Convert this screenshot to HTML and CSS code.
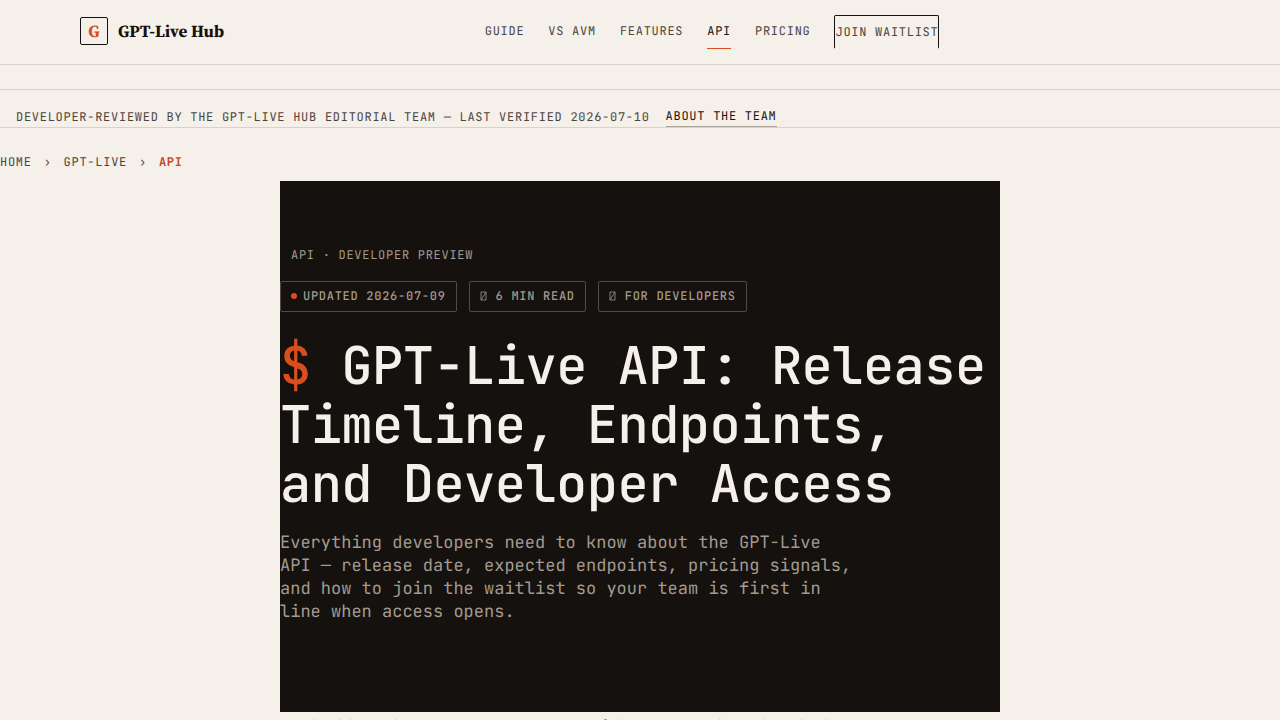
FILE: index.html
```html
<!DOCTYPE html>
<html lang="en">
<head>
  <meta charset="UTF-8">
  <meta name="viewport" content="width=device-width, initial-scale=1">
  <title>GPT-Live API</title>
  <link rel="stylesheet" href="styles.css">
</head>
<body>
<header class="site-header">
  <a class="brand" href="#">
    <span class="brand-mark">G</span>
    <span class="brand-name">GPT-Live Hub</span>
  </a>
  <nav class="site-nav" aria-label="Main">
    <a href="#">Guide</a>
    <a href="#">vs AVM</a>
    <a href="#">Features</a>
    <a class="active" href="#">API</a>
    <a href="#">Pricing</a>
    <a class="nav-cta" href="#">Join waitlist</a>
  </nav>
  <div class="header-end"></div>
</header>

<div class="review-bar">
  <span>Developer-reviewed by the GPT-Live Hub editorial team — last verified 2026-07-10</span>
  <a href="#">About the team</a>
</div>

<nav class="breadcrumb" aria-label="Breadcrumb">
  <a href="#">Home</a>
  <span class="sep">›</span>
  <a href="#">GPT-Live</a>
  <span class="sep">›</span>
  <span class="current">API</span>
</nav>

<main class="page">
  <section class="hero">
    <p class="eyebrow">API · Developer preview</p>
    <div class="tags">
      <span class="tag"><span class="dot"></span>Updated 2026-07-09</span>
      <span class="tag">
        <svg class="tag-icon" viewBox="0 0 8 10" aria-hidden="true"><path d="M1 1h5v8h-5zM1 9l5-8"/></svg>
        6 min read
      </span>
      <span class="tag">
        <svg class="tag-icon" viewBox="0 0 8 10" aria-hidden="true"><path d="M1 1h5v8h-5zM1 9l5-8"/></svg>
        For developers
      </span>
    </div>
    <h1><span class="prompt">$</span> GPT-Live API: Release Timeline, Endpoints, and Developer Access</h1>
    <p class="lead">Everything developers need to know about the GPT-Live API — release date, expected endpoints, pricing signals, and how to join the waitlist so your team is first in line when access opens.</p>
  </section>
  <p class="intro">For builders, the most interesting part of the GPT-Live launch is the key</p>
</main>
</body>
</html>
```
FILE: styles.css
```css
:root {
  --paper: #f5f0ea;
  --ink: #15110e;
  --ink-soft: #4a443e;
  --line: #d8d2cb;
  --muted: #a39b90;
  --accent: #d94e1f;
  --accent-deep: #c9451b;
  --mono: "JetBrains Mono", "Liberation Mono", monospace;
  --serif: "Source Serif 4", "Liberation Serif", serif;
}
* {
  box-sizing: border-box;
}
body {
  margin: 0;
  background: var(--paper);
  color: var(--ink);
  font-family: var(--serif);
  font-size: 18px;
  line-height: 31px;
  text-rendering: geometricPrecision;
}
a {
  color: inherit;
  text-decoration: none;
}
h1, p {
  margin: 0;
}

/* header */
.site-header {
  display: flex;
  justify-content: space-between;
  align-items: center;
  height: 65px;
  padding: 0 80px;
  border-bottom: 1px solid var(--line);
}
.brand {
  display: flex;
  align-items: center;
  gap: 10px;
  padding-bottom: 2px;
}
.brand-mark,
.brand-name {
  font-size: 17px;
  font-weight: 700;
}
.brand-mark {
  display: flex;
  align-items: center;
  justify-content: center;
  width: 28px;
  height: 28px;
  border: 1px solid var(--ink);
  border-radius: 2px;
  color: var(--accent);
}
.site-nav,
.review-bar,
.breadcrumb,
.eyebrow,
.tag {
  font-family: var(--mono);
  font-size: 12px;
  line-height: 16px;
  letter-spacing: 0.06em;
  text-transform: uppercase;
}
.site-nav {
  display: flex;
  gap: 24px;
  height: 34px;
  color: var(--ink-soft);
}
.site-nav a {
  padding-top: 8px;
  border-bottom: 1px solid transparent;
}
.site-nav .active {
  color: var(--ink);
  border-bottom-color: var(--accent);
}
.site-nav .nav-cta {
  border: 1px solid var(--ink);
  border-bottom-color: transparent;
  border-radius: 2px;
}

/* review line */
.review-bar {
  display: flex;
  gap: 16px;
  margin-top: 24px;
  padding: 18px 16px 0;
  border-top: 1px solid var(--line);
  border-bottom: 1px solid var(--line);
  color: var(--ink-soft);
}
.review-bar span {
  padding-top: 1px;
}
.review-bar a {
  padding-bottom: 2px;
  color: var(--ink);
  border-bottom: 1px solid #aaa39b;
}

.breadcrumb {
  display: flex;
  gap: 12px;
  padding: 26px 0 11px;
  color: var(--ink-soft);
}
.current {
  color: var(--accent-deep);
  font-weight: 600;
}

/* hero */
.page {
  max-width: 720px;
  margin: 0 auto;
}
.hero {
  padding: 66px 0 88px;
  background: var(--ink);
  color: var(--muted);
  font-family: var(--mono);
}
.eyebrow {
  padding-left: 11px;
}
.tags {
  display: flex;
  flex-wrap: wrap;
  gap: 12px;
  margin: 18px 0 24px;
}
.tag {
  display: flex;
  align-items: center;
  padding: 6px 10px 7px;
  border: 1px solid #514b46;
  border-radius: 2px;
  font-weight: 500;
}
.dot {
  width: 6px;
  height: 6px;
  margin-right: 6px;
  border-radius: 50%;
  background: var(--accent);
}
.tag-icon {
  width: 8px;
  height: 10px;
  margin-right: 8px;
  fill: none;
  stroke: currentColor;
  stroke-width: 0.8;
}
h1 {
  color: var(--paper);
  font-size: 52px;
  font-weight: 500;
  line-height: 59px;
  letter-spacing: -0.01em;
}
.prompt {
  color: var(--accent);
}
.lead {
  max-width: 580px;
  margin-top: 19px;
  font-size: 17px;
  line-height: 23px;
}
```
